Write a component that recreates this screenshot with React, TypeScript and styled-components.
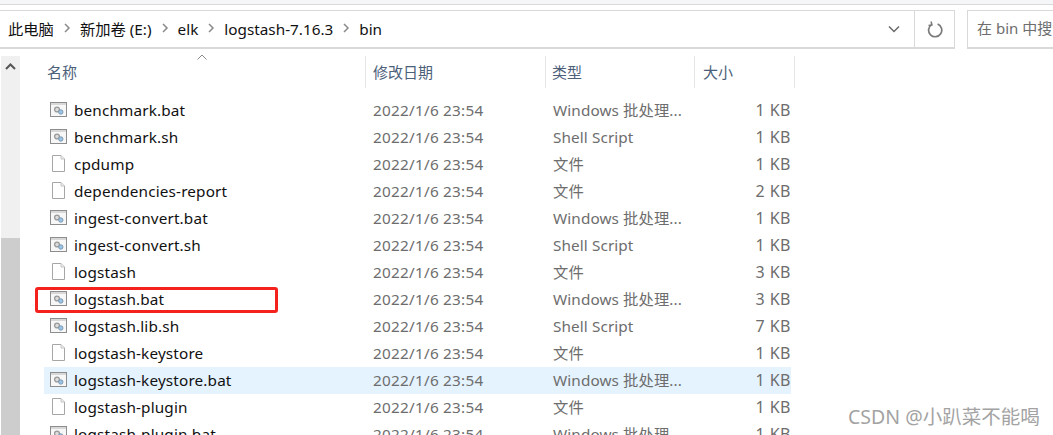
import React from "react";
import styled, { createGlobalStyle } from "styled-components";

const Global = createGlobalStyle`
  html, body { margin: 0; padding: 0; background: #fff; overflow: hidden; }
  #root { width: 1053px; height: 435px; }
`;
const UI = `"Noto Sans", "Noto Sans CJK SC", sans-serif`;

const Page = styled.div`
  position: relative; width: 1053px; height: 435px; overflow: hidden; background: #fff;
  font-family: ${UI}; font-size: 15px; display: flex; flex-direction: column;
`;
const TopStrip = styled.div`
  height: 4px; background: #f5f6f7; border-bottom: 1px solid #d9d9d9; margin-bottom: 5px; flex: none;
`;
const Toolbar = styled.div`
  height: 39px; flex: none; display: flex; gap: 12px;
`;
const AddressBar = styled.div`
  width: 955px; box-sizing: border-box; border: 2px solid #d9d9d9; border-width: 1px 1px 2px 0;
  display: flex; align-items: center;
`;
const Crumbs = styled.div`
  flex: 1; display: flex; align-items: center; padding-left: 8px; color: #111; font-size: 15.3px;
`;
const Crumb = styled.span`line-height: 36px; white-space: nowrap;`;
const Chevron = styled.svg`width: 8px; height: 12px; margin: -2px 9px 0 9px; flex: none;`;
const DropButton = styled.div`
  width: 36px; display: flex; align-items: center; justify-content: center; padding-right: 4px; box-sizing: border-box;
`;
const RefreshButton = styled.div`
  width: 39px; height: 100%; border-left: 1px solid #d9d9d9; display: flex; align-items: center; justify-content: center;
`;
const SearchBox = styled.div`
  flex: 1; box-sizing: border-box; border: 1px solid #d9d9d9; border-bottom-width: 2px; border-right: none;
  padding-left: 9px; line-height: 35px; color: #6d6d6d; white-space: nowrap; overflow: hidden;
`;
const Body = styled.div`flex: 1; display: flex; min-height: 0; margin-top: 7px;`;
const ScrollBar = styled.div`
  width: 19px; margin-left: 1px; margin-right: 24px; background: #f0f0f0; flex: none; display: flex; flex-direction: column;
`;
const ScrollArrow = styled.div`height: 20px; display: flex; align-items: center; justify-content: center;`;
const ScrollThumb = styled.div`margin-top: 162px; flex: 1; background: #cdcdcd;`;
const Pane = styled.div`flex: 1; min-width: 0;`;
const Cols = `322px 180px 149px 100px`;
const HeaderRow = styled.div`
  display: grid; grid-template-columns: ${Cols}; height: 32px; margin-bottom: 9px; position: relative;
`;
const HeaderCell = styled.div`
  box-sizing: border-box; border-right: 1px solid #e5e5e5; color: #4c607a; line-height: 32px; padding-left: ${p => p.$pad}px;
`;
const SortCaret = styled.svg`position: absolute; left: 153px; top: -2px; width: 10px; height: 6px;`;
const Row = styled.div`
  display: grid; grid-template-columns: ${Cols}; width: 747px; height: 27px; align-items: center; line-height: 27px;
  background: ${p => (p.$hover ? "#e5f3ff" : "transparent")}; white-space: nowrap; font-size: 15.3px;
`;
const NameCell = styled.div`display: flex; align-items: center; color: #111; letter-spacing: 0.15px;`;
const IconSlot = styled.div`width: 17px; height: 17px; margin: -2px 7px 0 6px; flex: none;`;
const DateCell = styled.div`color: #6d6d6d; padding-left: 7px; letter-spacing: 0.25px;`;
const TypeCell = styled.div`color: #6d6d6d; padding-left: 7px; letter-spacing: 0.1px;`;
const SizeCell = styled.div`color: #6d6d6d; text-align: right; padding-right: 4px; margin-left: -20px; font-size: 16px; letter-spacing: 0.5px;`;
const RedMark = styled.div`
  position: absolute; left: 35px; top: 287px; width: 243px; height: 26px; box-sizing: border-box;
  border: 3px solid #f5211d; border-radius: 3px;
`;
const Watermark = styled.div`
  position: absolute; left: 848px; top: 403px; font-size: 19.5px; line-height: 28px; color: #a3a3a3; font-family: ${UI}; white-space: nowrap;
`;

const BatIcon = () => (
  <svg width="17" height="15" viewBox="0 0 17 15" style={{ display: "block", marginTop: 1 }}>
    <rect x="0.5" y="0.5" width="16" height="14" fill="#f7f7f7" stroke="#8d8d8d" />
    <rect x="1" y="1" width="15" height="2" fill="#d8d8d8" />
    <circle cx="7" cy="7.5" r="2.4" fill="#ddd" stroke="#9a9a9a" strokeWidth="1.3" />
    <circle cx="10.8" cy="10" r="2.2" fill="#9cc4e4" stroke="#7c9ab5" />
  </svg>
);
const FileIcon = () => (
  <svg width="17" height="17" viewBox="0 0 17 17" style={{ display: "block" }}>
    <path d="M2.5 .5H11L14.5 4V16.5H2.5Z" fill="#fff" stroke="#a6a6a6" />
    <path d="M11 .5V4H14.5" fill="#f0f0f0" stroke="#c4c4c4" />
  </svg>
);
const Sep = () => (
  <Chevron viewBox="0 0 8 12"><path d="M2 2l4 4-4 4" fill="none" stroke="#8a8a8a" strokeWidth="1.5" /></Chevron>
);

const BAT = "Windows 批处理...";
const SH = "Shell Script";
const F = "文件";
const D = "2022/1/6 23:54";
const files: [string, string, string, boolean][] = [
  ["benchmark.bat", BAT, "1 KB", true],
  ["benchmark.sh", SH, "1 KB", true],
  ["cpdump", F, "1 KB", false],
  ["dependencies-report", F, "2 KB", false],
  ["ingest-convert.bat", BAT, "1 KB", true],
  ["ingest-convert.sh", SH, "1 KB", true],
  ["logstash", F, "3 KB", false],
  ["logstash.bat", BAT, "3 KB", true],
  ["logstash.lib.sh", SH, "7 KB", true],
  ["logstash-keystore", F, "1 KB", false],
  ["logstash-keystore.bat", BAT, "1 KB", true],
  ["logstash-plugin", F, "1 KB", false],
  ["logstash-plugin.bat", BAT, "1 KB", true],
];

export default function App() {
  return (
    <Page>
      <Global />
      <TopStrip />
      <Toolbar>
        <AddressBar>
          <Crumbs>
            <Crumb>此电脑</Crumb><Sep />
            <Crumb>新加卷 (E:)</Crumb><Sep />
            <Crumb>elk</Crumb><Sep />
            <Crumb>logstash-7.16.3</Crumb><Sep />
            <Crumb>bin</Crumb>
          </Crumbs>
          <DropButton>
            <svg width="12" height="8" viewBox="0 0 12 8"><path d="M1 1.5l5 5 5-5" fill="none" stroke="#6a6a6a" strokeWidth="1.5" /></svg>
          </DropButton>
          <RefreshButton>
            <svg width="16" height="17" viewBox="0 0 16 17">
              <path d="M4.6 3.6A6.6 6.6 0 1 0 10.6 3" fill="none" stroke="#7a7a7a" strokeWidth="1.7" />
              <path d="M4 .5L5 4 1.5 4.6" fill="none" stroke="#7a7a7a" strokeWidth="1.5" />
            </svg>
          </RefreshButton>
        </AddressBar>
        <SearchBox>在 bin 中搜索</SearchBox>
      </Toolbar>
      <Body>
        <ScrollBar>
          <ScrollArrow>
            <svg width="11" height="7" viewBox="0 0 11 7"><path d="M1 6l4.5-4.5L10 6" fill="none" stroke="#555" strokeWidth="2" /></svg>
          </ScrollArrow>
          <ScrollThumb />
        </ScrollBar>
        <Pane>
          <HeaderRow>
            <SortCaret viewBox="0 0 10 6"><path d="M.5 5.5L5 1l4.5 4.5" fill="none" stroke="#8a8a8a" /></SortCaret>
            <HeaderCell $pad={3}>名称</HeaderCell>
            <HeaderCell $pad={7}>修改日期</HeaderCell>
            <HeaderCell $pad={6}>类型</HeaderCell>
            <HeaderCell $pad={8}>大小</HeaderCell>
          </HeaderRow>
          {files.map(([name, type, size, bat], i) => (
            <Row key={name} $hover={i === 10}>
              <NameCell>
                <IconSlot>{bat ? <BatIcon /> : <FileIcon />}</IconSlot>
                {name}
              </NameCell>
              <DateCell>{D}</DateCell>
              <TypeCell>{type}</TypeCell>
              <SizeCell>{size}</SizeCell>
            </Row>
          ))}
        </Pane>
      </Body>
      <RedMark />
      <Watermark>CSDN @小趴菜不能喝</Watermark>
    </Page>
  );
}
